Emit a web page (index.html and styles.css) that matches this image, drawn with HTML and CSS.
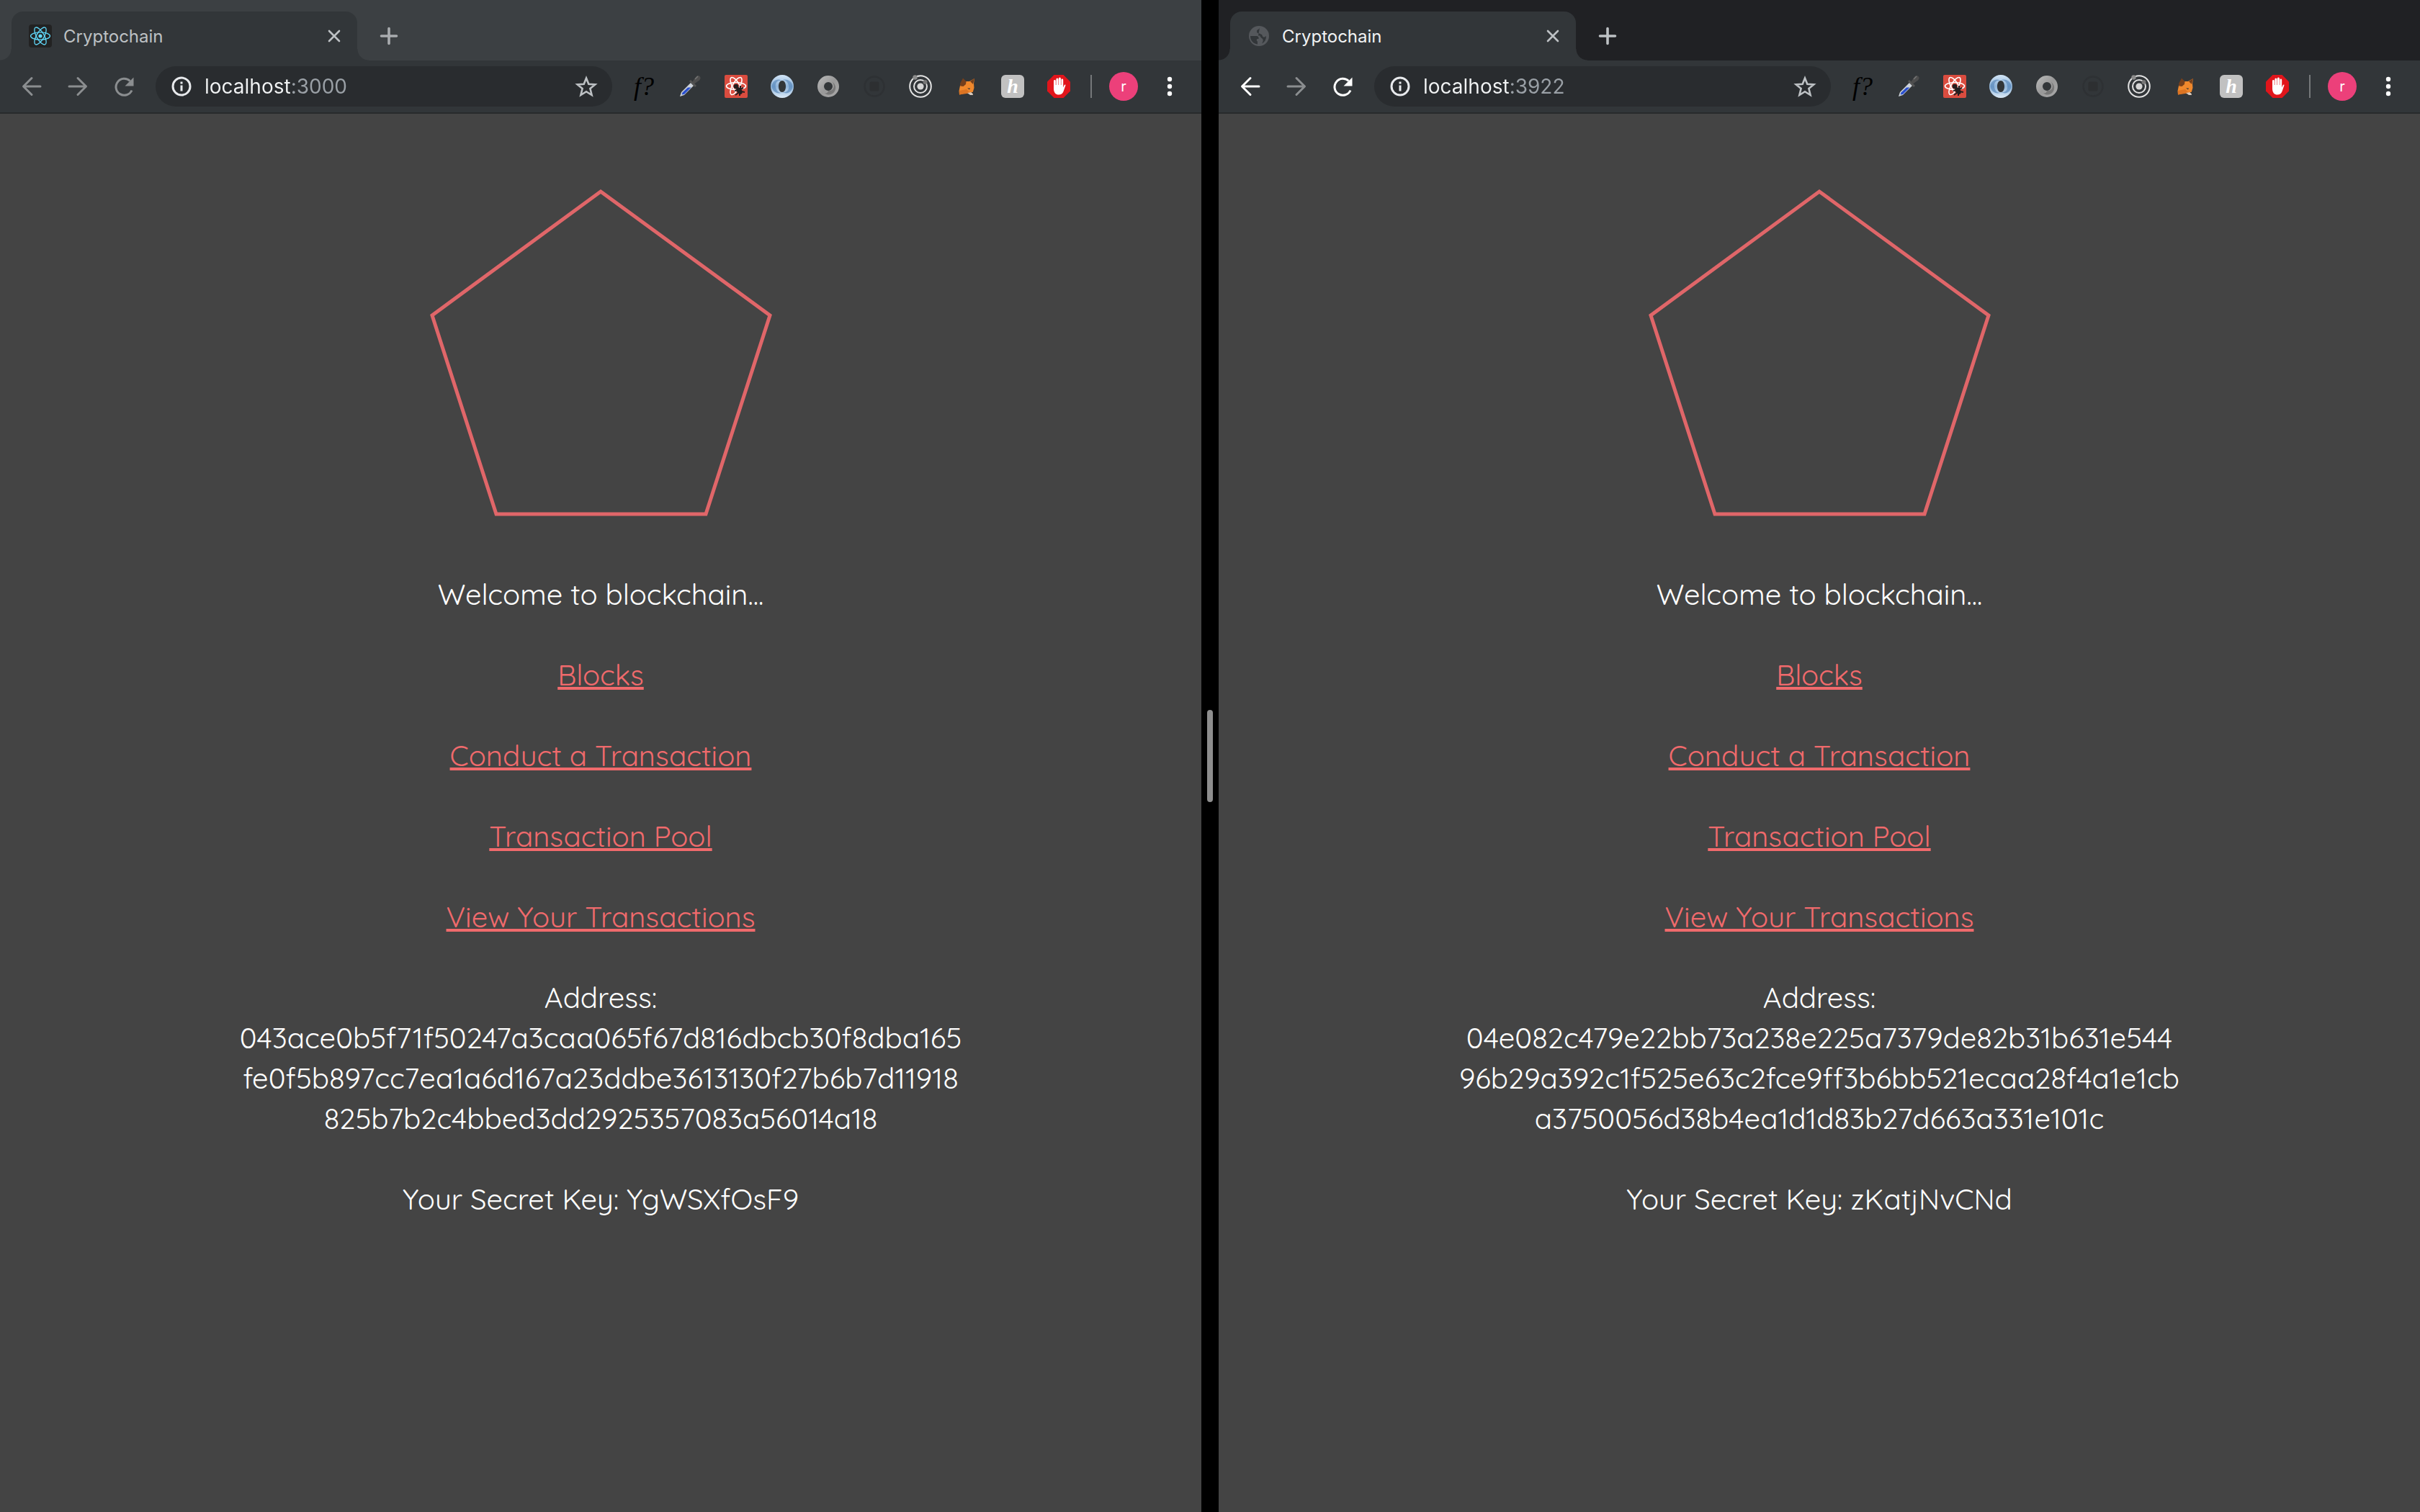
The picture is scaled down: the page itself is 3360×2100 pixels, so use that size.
FILE: index.html
```html
<!DOCTYPE html>
<html lang="en">
<head>
<meta charset="utf-8">
<title>Cryptochain</title>
<link rel="stylesheet" href="styles.css">
</head>
<body>

<svg class="sprite" aria-hidden="true">
  <symbol id="i-react" viewBox="0 0 32 32">
    <rect width="32" height="32" rx="4" fill="#222"/>
    <g fill="none" stroke="#61dafb" stroke-width="1.3">
      <ellipse cx="16" cy="16" rx="13.5" ry="5.2"/>
      <ellipse cx="16" cy="16" rx="13.5" ry="5.2" transform="rotate(60 16 16)"/>
      <ellipse cx="16" cy="16" rx="13.5" ry="5.2" transform="rotate(120 16 16)"/>
    </g>
    <circle cx="16" cy="16" r="2.6" fill="#61dafb"/>
  </symbol>
  <symbol id="i-globe" viewBox="0 0 32 32">
    <circle cx="16" cy="16" r="14" fill="#55585c"/>
    <path d="M4 16h8c3 0 4 2 3.500 4h-2c-1 1-1 3 .5 3.500V27.500C8 27 4 22 4 16zM17 4.500c-1 3-4 2-4 5 0 2 1 3 3.500 3 1 0 2 1.500 3.500 1.500 1.500 3 1 4 4 3.500l2-1.500c0 5-2 8.500-6 10.500 1-2 2.500-4 1-6.500-1.500-1.500-4-3-3.500-4.500H15" fill="#323639"/>
  </symbol>
  <symbol id="i-close" viewBox="0 0 32 32"><path d="M9 9l14 14M23 9L9 23" fill="none" stroke="currentColor" stroke-width="2.600" stroke-linecap="round"/></symbol>
  <symbol id="i-plus" viewBox="0 0 32 32"><path d="M16 5.500v21M5.500 16h21" fill="none" stroke="currentColor" stroke-width="3.600" stroke-linecap="round"/></symbol>
  <symbol id="i-back" viewBox="0 0 32 32"><path d="M28 16H5M16 4.500L4.500 16 16 27.500" fill="none" stroke="currentColor" stroke-width="3" stroke-linecap="round" stroke-linejoin="round"/></symbol>
  <symbol id="i-forward" viewBox="0 0 32 32"><path d="M4 16h23M16 4.500L27.500 16 16 27.500" fill="none" stroke="currentColor" stroke-width="3" stroke-linecap="round" stroke-linejoin="round"/></symbol>
  <symbol id="i-reload" viewBox="0 0 32 32">
    <path d="M27 21.500A11.500 11.500 0 1 1 24.500 8.500" fill="none" stroke="currentColor" stroke-width="3"/>
    <path d="M29.500 3.500V15.500H17.500z" fill="currentColor"/>
  </symbol>
  <symbol id="i-info" viewBox="0 0 32 32">
    <circle cx="16" cy="16" r="12" fill="none" stroke="currentColor" stroke-width="3"/>
    <path d="M14.500 9.500h3v3h-3zM14.500 14.500h3v8h-3z" fill="currentColor"/>
  </symbol>
  <symbol id="i-star" viewBox="0 0 32 32"><path d="M16 4.500l3.300 8.300 9 .6-6.900 5.700 2.200 8.900L16 23.200l-7.600 4.800 2.200-8.900-6.900-5.700 9-.6z" fill="none" stroke="currentColor" stroke-width="2.600"/></symbol>
  <symbol id="i-dropper" viewBox="0 0 32 32">
    <path d="M2 30l2-6L17 11l4 4L8 28z" fill="#cdd3da"/>
    <path d="M4.500 27.500l1-3L13 17.500h4.500L8 27z" fill="#2b50cf"/>
    <path d="M15 9l8 8 2-2-8-8z" fill="#555"/>
    <path d="M19 10l5-7c2-2.500 4-2.500 5.500-1s1.500 3.500-.5 5.500l-7 5z" fill="#4d4d4d"/>
    <path d="M23 6l4-4" stroke="#777" stroke-width="1.500"/>
  </symbol>
  <symbol id="i-reactbug" viewBox="0 0 32 32">
    <rect width="32" height="32" rx="2" fill="#da4c3f"/>
    <g fill="none" stroke="#fff" stroke-width="1.600">
      <ellipse cx="16" cy="15.500" rx="13.500" ry="5"/>
      <ellipse cx="16" cy="15.500" rx="13.500" ry="5" transform="rotate(60 16 15.500)"/>
      <ellipse cx="16" cy="15.500" rx="13.500" ry="5" transform="rotate(120 16 15.500)"/>
    </g>
    <path d="M16 18l1 12h10v-9z" fill="#da4c3f"/>
    <circle cx="16" cy="16" r="3.300" fill="#231f20"/>
    <ellipse cx="20.500" cy="22" rx="3.500" ry="5.500" transform="rotate(-35 20.500 22)" fill="#231f20"/>
    <path d="M14 22l4-1M15 28l4-3M21 29l0-4M22 15l0 4M26 18l-4 2M28 24l-5-1" stroke="#231f20" stroke-width="2"/>
  </symbol>
  <linearGradient id="g-blue" x1="0" y1="0" x2="0" y2="1"><stop offset="0" stop-color="#d4e7f8"/><stop offset=".5" stop-color="#8db2d8"/><stop offset="1" stop-color="#dcebf8"/></linearGradient>
  <linearGradient id="g-gray" x1="0" y1="0" x2="1" y2="1"><stop offset="0" stop-color="#bcbcbc"/><stop offset=".5" stop-color="#999"/><stop offset="1" stop-color="#aaa"/></linearGradient>
  <symbol id="i-bluering" viewBox="0 0 32 32">
    <path fill-rule="evenodd" d="M16 0a16 16 0 1 1 0 32 16 16 0 0 1 0-32zm0 8c-3 0-5 3.500-5 8s2 8 5 8 5-3.500 5-8-2-8-5-8z" fill="url(#g-blue)"/>
    <path d="M15 8c-6-1-9 4-8 9 1 5 4 8 8 8C8 27 2 22 1.500 16 2 9 9 4 15 8zM17 24c6 1 9-4 8-9-1-5-4-8-8-8 7-2 13 3 13.500 9C30 23 23 28 17 24z" fill="#4f80b5" opacity=".6"/>
  </symbol>
  <symbol id="i-grayring" viewBox="0 0 32 32">
    <path fill-rule="evenodd" d="M16 1a15 15 0 1 1 0 30 15 15 0 0 1 0-30zm0 9a6 6 0 1 0 0 12 6 6 0 0 0 0-12z" fill="url(#g-gray)"/>
    <path d="M16 22c7 1 10-6 6-12 4 3 6 9 2 14-3 4-9 5-13 1 3 1 4 0 5-3z" fill="#666" opacity=".7"/>
  </symbol>
  <symbol id="i-dim" viewBox="0 0 32 32">
    <circle cx="16" cy="16" r="13.500" fill="none" stroke="#2e3134" stroke-width="2.500"/>
    <rect x="9.500" y="9.500" width="13" height="13" rx="2" fill="#2d2f31"/>
  </symbol>
  <symbol id="i-orbit" viewBox="0 0 32 32">
    <g fill="none" stroke="#e3e3e3" stroke-width="2"><circle cx="16" cy="16" r="14.800"/><circle cx="16" cy="16" r="9"/></g>
    <circle cx="16" cy="16" r="4.600" fill="#d6d6d6"/>
    <circle cx="8.500" cy="3.500" r="3.200" fill="#8c8c8c"/><circle cx="22.500" cy="10" r="3" fill="#777"/>
  </symbol>
  <symbol id="i-fox" viewBox="0 0 32 32">
    <path d="M7 15l6-6 7 0 7-4-1 7 .5 6-1.500 5-1 3-8-1-10 2.500-.5-5z" fill="#f0882c"/>
    <path d="M7.500 15.500L7 12l4-7.500 4.500 4.500-.5 4-3.500 3zM27 5l-6 4 4 4z" fill="#753f1c"/>
    <path d="M6 22l10-2 5 5-5 1-10 1.500z" fill="#dc7423"/>
    <path d="M17 25l7-1 1 4-4 0z" fill="#d8c9bc"/><path d="M17 18.500l4 0-1 2z" fill="#373737"/><path d="M22.500 24h2.500l-.5 2z" fill="#222"/>
  </symbol>
  <symbol id="i-hand" viewBox="0 0 32 32">
    <path d="M9.500 0h13L32 9.500v13L22.500 32h-13L0 22.500v-13z" fill="#e1151b"/>
    <path d="M9 19V8.500a1.400 1.400 0 0 1 2.800 0V14h.6V6a1.500 1.500 0 0 1 3 0v8h.5V5a1.500 1.500 0 0 1 3 0v9h.5V7a1.400 1.400 0 0 1 2.800 0v10.500l1.300-3c1-1.500 2.300-1.200 1.900.3L22.500 23c-1 3-3.500 4.500-6.500 4.500-4 0-7-2.500-7-8.500z" fill="#fff"/>
  </symbol>
  <symbol id="i-menu" viewBox="0 0 32 32"><g fill="#fff"><circle cx="16" cy="6" r="3.200"/><circle cx="16" cy="16" r="3.200"/><circle cx="16" cy="26" r="3.200"/></g></symbol>
  <symbol id="i-pentagon" viewBox="594 260 480 460">
    <path d="M834 266L1069 438 980 714H689L600 438z" fill="none" stroke="#e06669" stroke-width="5"/>
  </symbol>
</svg>

<section class="window inactive" aria-label="Cryptochain on port 3000">
  <header>
    <div class="tab-strip">
      <div class="tab">
        <svg class="icon"><use href="#i-react"/></svg>
        <span class="tab-title">Cryptochain</span>
        <button class="tab-close" aria-label="Close tab"><svg class="icon"><use href="#i-close"/></svg></button>
      </div>
      <button class="new-tab" aria-label="New tab"><svg class="icon"><use href="#i-plus"/></svg></button>
    </div>
    <div class="toolbar">
      <button class="tool dim" aria-label="Back"><svg class="icon"><use href="#i-back"/></svg></button>
      <button class="tool dim" aria-label="Forward"><svg class="icon"><use href="#i-forward"/></svg></button>
      <button class="tool dim" aria-label="Reload"><svg class="icon"><use href="#i-reload"/></svg></button>
      <div class="omnibox">
        <svg class="icon"><use href="#i-info"/></svg>
        <input class="url" type="text" aria-label="Address bar" value="localhost:3000">
        <button class="star" aria-label="Bookmark"><svg class="icon"><use href="#i-star"/></svg></button>
      </div>
      <button class="tool whatfont">f?</button>
      <button class="tool" aria-label="Color picker"><svg class="icon"><use href="#i-dropper"/></svg></button>
      <button class="tool" aria-label="React tools"><svg class="icon"><use href="#i-reactbug"/></svg></button>
      <button class="tool" aria-label="Blue ring"><svg class="icon"><use href="#i-bluering"/></svg></button>
      <button class="tool" aria-label="Gray ring"><svg class="icon"><use href="#i-grayring"/></svg></button>
      <button class="tool" aria-label="Disabled extension"><svg class="icon"><use href="#i-dim"/></svg></button>
      <button class="tool" aria-label="Orbit"><svg class="icon"><use href="#i-orbit"/></svg></button>
      <button class="tool" aria-label="Wallet"><svg class="icon"><use href="#i-fox"/></svg></button>
      <button class="tool"><span class="honey">h</span></button>
      <button class="tool" aria-label="Ad blocker"><svg class="icon"><use href="#i-hand"/></svg></button>
      <span class="separator"></span>
      <button class="tool"><span class="avatar">r</span></button>
      <button class="tool" aria-label="Menu"><svg class="icon"><use href="#i-menu"/></svg></button>
    </div>
  </header>
  <main class="page">
    <svg class="logo" aria-hidden="true"><use href="#i-pentagon"/></svg>
    <p>Welcome to blockchain...</p>
    <p><a href="#blocks">Blocks</a></p>
    <p><a href="#conduct">Conduct a Transaction</a></p>
    <p><a href="#pool">Transaction Pool</a></p>
    <p><a href="#transactions">View Your Transactions</a></p>
    <p>Address:<br>043ace0b5f71f50247a3caa065f67d816dbcb30f8dba165<br>fe0f5b897cc7ea1a6d167a23ddbe3613130f27b6b7d11918<br>825b7b2c4bbed3dd2925357083a56014a18</p>
    <p>Your Secret Key: YgWSXfOsF9</p>
  </main>
</section>

<div class="divider" role="separator"><span class="handle"></span></div>

<section class="window active" aria-label="Cryptochain on port 3922">
  <header>
    <div class="tab-strip">
      <div class="tab">
        <svg class="icon"><use href="#i-globe"/></svg>
        <span class="tab-title">Cryptochain</span>
        <button class="tab-close" aria-label="Close tab"><svg class="icon"><use href="#i-close"/></svg></button>
      </div>
      <button class="new-tab" aria-label="New tab"><svg class="icon"><use href="#i-plus"/></svg></button>
    </div>
    <div class="toolbar">
      <button class="tool" aria-label="Back"><svg class="icon"><use href="#i-back"/></svg></button>
      <button class="tool dim" aria-label="Forward"><svg class="icon"><use href="#i-forward"/></svg></button>
      <button class="tool" aria-label="Reload"><svg class="icon"><use href="#i-reload"/></svg></button>
      <div class="omnibox">
        <svg class="icon"><use href="#i-info"/></svg>
        <input class="url" type="text" aria-label="Address bar" value="localhost:3922">
        <button class="star" aria-label="Bookmark"><svg class="icon"><use href="#i-star"/></svg></button>
      </div>
      <button class="tool whatfont">f?</button>
      <button class="tool" aria-label="Color picker"><svg class="icon"><use href="#i-dropper"/></svg></button>
      <button class="tool" aria-label="React tools"><svg class="icon"><use href="#i-reactbug"/></svg></button>
      <button class="tool" aria-label="Blue ring"><svg class="icon"><use href="#i-bluering"/></svg></button>
      <button class="tool" aria-label="Gray ring"><svg class="icon"><use href="#i-grayring"/></svg></button>
      <button class="tool" aria-label="Disabled extension"><svg class="icon"><use href="#i-dim"/></svg></button>
      <button class="tool" aria-label="Orbit"><svg class="icon"><use href="#i-orbit"/></svg></button>
      <button class="tool" aria-label="Wallet"><svg class="icon"><use href="#i-fox"/></svg></button>
      <button class="tool"><span class="honey">h</span></button>
      <button class="tool" aria-label="Ad blocker"><svg class="icon"><use href="#i-hand"/></svg></button>
      <span class="separator"></span>
      <button class="tool"><span class="avatar">r</span></button>
      <button class="tool" aria-label="Menu"><svg class="icon"><use href="#i-menu"/></svg></button>
    </div>
  </header>
  <main class="page">
    <svg class="logo" aria-hidden="true"><use href="#i-pentagon"/></svg>
    <p>Welcome to blockchain...</p>
    <p><a href="#blocks">Blocks</a></p>
    <p><a href="#conduct">Conduct a Transaction</a></p>
    <p><a href="#pool">Transaction Pool</a></p>
    <p><a href="#transactions">View Your Transactions</a></p>
    <p>Address:<br>04e082c479e22bb73a238e225a7379de82b31b631e544<br>96b29a392c1f525e63c2fce9ff3b6bb521ecaa28f4a1e1cb<br>a3750056d38b4ea1d1d83b27d663a331e101c</p>
    <p>Your Secret Key: zKatjNvCNd</p>
  </main>
</section>

</body>
</html>
```
FILE: styles.css
```css
* { box-sizing: border-box; }

body {
  margin: 0;
  min-height: 100vh;
  display: grid;
  grid-template-columns: 1fr 24px 1fr;
  background: #444;
  font-family: Inter, Roboto, sans-serif;
}

button {
  display: flex;
  align-items: center;
  justify-content: center;
  padding: 0;
  border: 0;
  background: none;
  color: inherit;
  font: inherit;
}

.sprite { position: absolute; width: 0; height: 0; }
.icon { display: block; flex: none; width: 32px; height: 32px; }

.window { min-width: 0; overflow: hidden; }

/* Tab strip */
.tab-strip {
  display: flex;
  height: 84px;
  padding: 16px 16px 0;
  background: #202124;
}
.inactive .tab-strip { background: #3c4043; }

.tab {
  position: relative;
  display: flex;
  align-items: center;
  width: 480px;
  padding: 0 16px 0 24px;
  border-radius: 16px 16px 0 0;
  background: #323639;
  color: #f1f3f4;
  font-size: 24px;
}
.inactive .tab { color: #bdc1c4; }

/* Concave feet where the tab meets the toolbar */
.tab::before,
.tab::after {
  content: "";
  position: absolute;
  bottom: 0;
  width: 16px;
  height: 16px;
}
.tab::before { right: 100%; background: radial-gradient(circle at 0 0, transparent 15px, #323639 16px); }
.tab::after { left: 100%; background: radial-gradient(circle at 100% 0, transparent 15px, #323639 16px); }

.tab-title { flex: 1; padding-left: 16px; }
.tab-close { color: #bdc1c4; }
.new-tab { width: 88px; color: #bdc1c4; }
.inactive .new-tab { color: #a9acaf; }

/* Toolbar */
.toolbar {
  display: flex;
  align-items: center;
  height: 74px;
  padding: 0 12px;
  border-bottom: 2px solid #282a2c;
  background: #323639;
  color: #fff;
}
.tool { flex: none; width: 64px; height: 56px; }
.dim { color: #8b8e90; }

.omnibox {
  flex: 1;
  display: flex;
  align-items: center;
  min-width: 0;
  height: 56px;
  margin: 0 12px;
  padding: 0 20px;
  border-radius: 28px;
  background: #292c2f;
  color: #e8eaed;
}
/* The host is bright, the port after it is gray */
.url {
  flex: 1;
  min-width: 0;
  margin-left: 16px;
  padding: 0;
  border: 0;
  background: linear-gradient(90deg, #f1f3f4 120px, #9aa0a6 120px);
  -webkit-background-clip: text;
  background-clip: text;
  color: transparent;
  font: 28px Inter, Roboto, sans-serif;
}
.star { color: #bdc1c4; }

.whatfont {
  color: #000;
  font: italic 36px "Liberation Serif", serif;
}
.honey {
  width: 32px;
  height: 32px;
  border-radius: 6px;
  background: #c1c1c1;
  color: #fff;
  font: italic bold 28px/32px "Liberation Serif", serif;
}
.separator { width: 2px; height: 32px; margin: 0 12px; background: #75787a; }
.avatar {
  width: 40px;
  height: 40px;
  border-radius: 50%;
  background: #ec407a;
  font-size: 20px;
  line-height: 40px;
}

/* Split-view divider */
.divider {
  display: flex;
  align-items: center;
  justify-content: center;
  background: #000;
}
.handle { width: 8px; height: 128px; border-radius: 4px; background: #8e8e8e; }

/* Page */
.page {
  display: flex;
  flex-direction: column;
  align-items: center;
  gap: 56px;
  padding-top: 102px;
  color: #fff;
  font: 40px/56px Quicksand, "Liberation Sans", sans-serif;
  text-align: center;
}
.page p { margin: 0; }
.page a {
  color: #f06a6c;
  text-decoration-thickness: 4px;
  text-underline-offset: 2px;
  text-decoration-skip-ink: none;
}
.logo { width: 480px; height: 460px; margin-bottom: 21px; }
```
